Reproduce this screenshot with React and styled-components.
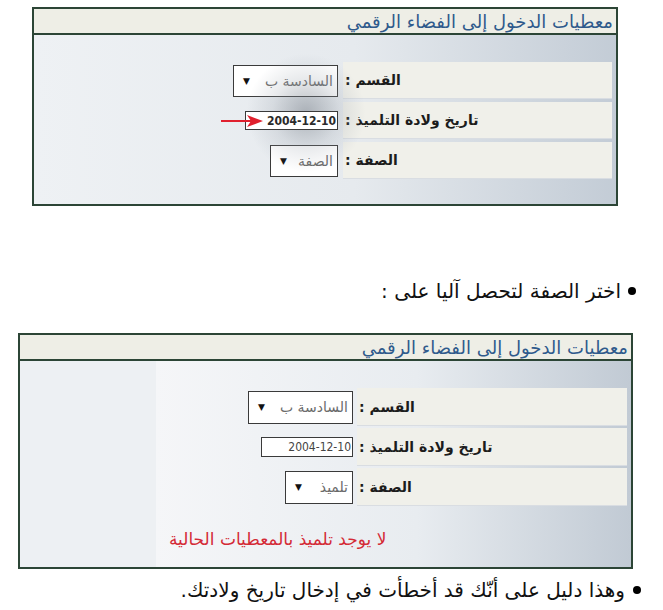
import React from 'react';
import styled, { createGlobalStyle } from 'styled-components';

const GlobalStyle = createGlobalStyle`
  html, body {
    margin: 0;
    padding: 0;
    background: #ffffff;
  }
  body {
    font-family: "DejaVu Sans", "Liberation Sans", sans-serif;
    width: 663px;
    height: 610px;
    overflow: hidden;
  }
`;

const Page = styled.div`
  display: flex;
  flex-direction: column;
  align-items: flex-start;
  padding-top: 7px;
`;

const Panel = styled.section`
  position: relative;
  direction: rtl;
  box-sizing: border-box;
  width: ${(p) => p.$width}px;
  height: ${(p) => p.$height}px;
  margin: ${(p) => p.$margin};
  border: 2px solid #2c4536;
  display: flex;
  flex-direction: column;
  background: #edf0f3;
`;

const Header = styled.div`
  height: 24px;
  flex: none;
  background: #eeeee6;
  border-bottom: 2px solid #2c4536;
  display: flex;
  align-items: center;
  padding-right: 3px;
  color: #2f5a8c;
  font-size: 18px;
  white-space: nowrap;
`;

const Body = styled.div`
  position: relative;
  flex: 1;
  display: flex;
  flex-direction: column;
  padding: ${(p) => p.$pad};
  background: ${(p) =>
    p.$plain
      ? '#edf0f3'
      : 'linear-gradient(to right, #eef1f4 0%, #e6eaee 55%, #c3ccd6 100%)'};
`;

const Card = styled.div`
  flex: 1;
  display: flex;
  flex-direction: column;
  padding: 27px 4px 0 0;
  background: linear-gradient(to right, #f5f6f8 0%, #e8ecf0 55%, #c1cad4 100%);
`;

const Rows = styled.div`
  display: flex;
  flex-direction: column;
  gap: ${(p) => p.$gap}px;
`;

const Row = styled.div`
  display: flex;
  height: ${(p) => p.$h}px;
`;

const LabelCell = styled.div`
  width: ${(p) => p.$w}px;
  flex: none;
  background: #f0f0ea;
  border-bottom: 1px solid #d9dde2;
  display: flex;
  align-items: center;
  justify-content: flex-end;
  padding-left: 2px;
  box-sizing: border-box;
  font-size: 14px;
  font-weight: bold;
  color: #1c1c1c;
  white-space: nowrap;
`;

const InputCell = styled.div`
  flex: 1;
  display: flex;
  align-items: center;
  justify-content: flex-start;
  padding-right: ${(p) => p.$gap}px;
`;

const Select = styled.div`
  box-sizing: border-box;
  width: ${(p) => p.$w}px;
  height: ${(p) => p.$h}px;
  background: #ffffff;
  border: 1px solid #3a3a3a;
  display: flex;
  align-items: center;
  justify-content: space-between;
  padding: 0 4px 0 9px;
  font-size: 14px;
  color: #6a6a6a;
  white-space: nowrap;
`;

const Caret = styled.span`
  font-size: 9px;
  color: #111;
`;

const DateBox = styled.div`
  position: relative;
  box-sizing: border-box;
  width: ${(p) => p.$w}px;
  height: ${(p) => p.$h}px;
  background: #ffffff;
  border: 1px solid #3a3a3a;
  display: flex;
  align-items: center;
  padding-right: 1px;
  font-family: "DejaVu Sans Condensed", "DejaVu Sans", sans-serif;
  font-size: 12px;
  font-weight: ${(p) => (p.$dark ? 600 : 400)};
  color: ${(p) => (p.$dark ? '#2a2a2a' : '#444')};
  direction: ltr;
  justify-content: flex-end;
  white-space: nowrap;
`;

const Shade = styled.div`
  position: absolute;
  left: 212px;
  top: 18px;
  width: 120px;
  height: 120px;
  border-radius: 50%;
  background: radial-gradient(circle, rgba(110, 118, 128, 0.5) 0%, rgba(150, 158, 168, 0.22) 40%, rgba(200, 205, 212, 0) 70%);
  pointer-events: none;
`;

const Arrow = styled.svg`
  position: absolute;
  left: -25px;
  top: 2px;
`;

const Notice = styled.div`
  margin-top: 23px;
  padding-left: 13px;
  text-align: left;
  color: #d42a36;
  font-size: 17px;
  white-space: nowrap;
`;

const Bullet = styled.p`
  direction: rtl;
  align-self: stretch;
  margin: ${(p) => p.$margin};
  display: flex;
  align-items: center;
  gap: ${(p) => p.$gap}px;
  padding-right: ${(p) => p.$right}px;
  font-size: 20px;
  line-height: 24px;
  color: #111;
  white-space: nowrap;
  &::before {
    content: '';
    width: 8px;
    height: 8px;
    border-radius: 50%;
    background: #000;
    flex: none;
  }
`;

const FormRows = ({ gap, rowH, labelW, inputGap, selH, dateH, dateW, role, dark, arrow }) => (
  <Rows $gap={gap}>
    <Row $h={rowH}>
      <LabelCell $w={labelW}>القسم :</LabelCell>
      <InputCell $gap={inputGap}>
        <Select $w={105} $h={selH}>
          <span>السادسة ب</span>
          <Caret>▼</Caret>
        </Select>
      </InputCell>
    </Row>
    <Row $h={rowH}>
      <LabelCell $w={labelW}>تاريخ ولادة التلميذ :</LabelCell>
      <InputCell $gap={inputGap}>
        <DateBox $w={dateW} $h={dateH} $dark={dark}>
          {arrow && (
            <Arrow width="42" height="14" viewBox="0 0 42 14">
              <line x1="0" y1="7" x2="30" y2="7" stroke="#e0202e" strokeWidth="2" />
              <path d="M26 1 L42 7 L26 13 L30 7 Z" fill="#e0202e" />
            </Arrow>
          )}
          2004-12-10
        </DateBox>
      </InputCell>
    </Row>
    <Row $h={rowH}>
      <LabelCell $w={labelW}>الصفة :</LabelCell>
      <InputCell $gap={inputGap}>
        <Select $w={68} $h={selH}>
          <span>{role}</span>
          <Caret>▼</Caret>
        </Select>
      </InputCell>
    </Row>
  </Rows>
);

export default function App() {
  return (
    <>
      <GlobalStyle />
      <Page>
        <Panel $width={586} $height={199} $margin="0 0 0 32px">
          <Header>معطيات الدخول إلى الفضاء الرقمي</Header>
          <Body $pad="27px 4px 0 0">
            <Shade />
            <FormRows
              gap={3}
              rowH={37}
              labelW={269}
              inputGap={5}
              selH={32}
              dateH={19}
              dateW={93}
              role="الصفة"
              dark
              arrow
            />
          </Body>
        </Panel>

        <Bullet $margin="73px 0 0 0" $right={27} $gap={7}>اختر الصفة لتحصل آليا على :</Bullet>

        <Panel $width={615} $height={236} $margin="30px 0 0 18px">
          <Header>معطيات الدخول إلى الفضاء الرقمي</Header>
          <Body $plain $pad="0 0 0 136px">
            <Card>
              <FormRows
                gap={2}
                rowH={38}
                labelW={270}
                inputGap={4}
                selH={33}
                dateH={20}
                dateW={92}
                role="تلميذ"
              />
              <Notice>لا يوجد تلميذ بالمعطيات الحالية</Notice>
            </Card>
          </Body>
        </Panel>

        <Bullet $margin="9px 0 0 0" $right={22} $gap={8}>وهذا دليل على أنّك قد أخطأت في إدخال تاريخ ولادتك.</Bullet>
      </Page>
    </>
  );
}
